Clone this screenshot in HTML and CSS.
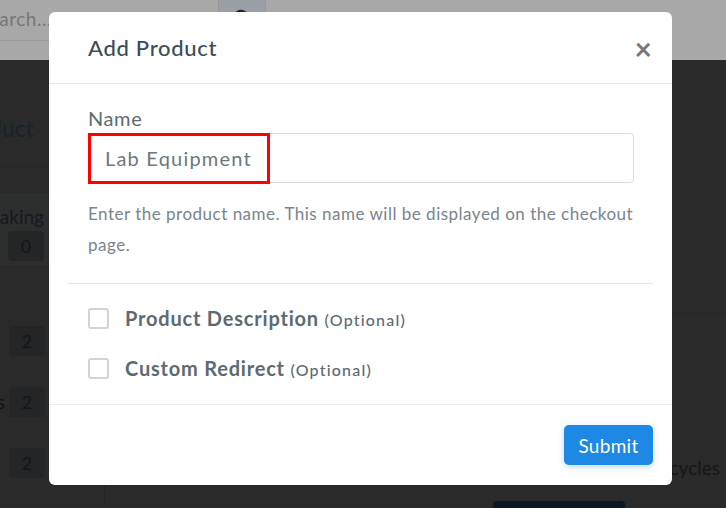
FILE: index.html
```html
<!DOCTYPE html>
<html lang="en">
<head>
  <meta charset="UTF-8">
  <title>Add Product</title>
  <link rel="stylesheet" href="styles.css">
</head>
<body>

<div class="topbar">
  <div class="search">
    <span class="search-input">Search...</span>
    <span class="search-btn">
      <svg width="20" height="20" viewBox="0 0 20 20"><circle cx="9" cy="9" r="6" fill="none" stroke="#222" stroke-width="2.5"/><path d="M13.5 13.5l5 5" stroke="#222" stroke-width="2.5"/></svg>
    </span>
  </div>
</div>

<div class="page">
  <div class="sidebar">
    <div class="side-title"><span>Product</span></div>
    <div class="side-block">
      <div class="side-line"><span>Making</span></div>
      <div class="side-line"><span class="badge">0</span></div>
    </div>
    <div class="side-row"><span class="badge">2</span></div>
    <div class="side-row"><span class="side-name">Items</span><span class="badge">2</span></div>
    <div class="side-row"><span class="badge">2</span></div>
  </div>
  <div class="main">
    <div class="main-top"></div>
    <div class="main-rest">
      <div class="cycles">Billing cycles</div>
      <div class="dark-btn"></div>
    </div>
  </div>
</div>

<div class="modal">
  <div class="modal-header">
    <h2>Add Product</h2>
    <span class="close">&times;</span>
  </div>
  <div class="modal-body">
    <label class="field-label">Name</label>
    <div class="input-wrap">
      <div class="input">Lab Equipment</div>
      <div class="marker"></div>
    </div>
    <p class="help">Enter the product name. This name will be displayed on the checkout page.</p>
  </div>
  <hr class="sep">
  <div class="options">
    <div class="option"><span class="check"></span><span class="opt-text">Product Description <small>(Optional)</small></span></div>
    <div class="option"><span class="check"></span><span class="opt-text">Custom Redirect <small>(Optional)</small></span></div>
  </div>
  <div class="modal-footer">
    <button class="submit">Submit</button>
  </div>
</div>

</body>
</html>
```

FILE: styles.css
```css
body {
  margin: 0;
  background-color: #2a2a2a;
  font-family: Lato, "Open Sans", sans-serif;
  height: 508px;
  overflow: hidden;
}
.topbar {
  height: 60px;
  background-color: #a8a8a8;
}
.search {
  display: flex;
  width: 266px;
  height: 41px;
  border-bottom: 1px solid #999;
  box-sizing: border-box;
}
.search-input {
  width: 242px;
  margin-left: -22px;
  padding-top: 7px;
  font-size: 19px;
  letter-spacing: 0.5px;
  color: #777;
  border-right: 1px solid #959595;
  box-sizing: border-box;
}
.search-btn {
  width: 46px;
  background-color: #9a9ea5;
  display: flex;
  justify-content: center;
  padding-top: 8px;
  border-right: 1px solid #999;
}
.page {
  display: flex;
  height: 448px;
}
.sidebar {
  width: 105px;
  flex-shrink: 0;
  border-right: 1px solid #242424;
  box-sizing: border-box;
}
.side-title {
  display: flex;
  justify-content: flex-end;
  padding: 54px 70px 24px 0;
  font-size: 23px;
  color: #17232b;
  white-space: nowrap;
  border-bottom: 1px solid #262626;
}
.side-block {
  margin-top: 26px;
  height: 72px;
  padding-top: 12px;
  box-sizing: border-box;
  background-color: #2d2f2f;
}
.side-line {
  display: flex;
  justify-content: flex-end;
  padding-right: 60px;
  font-size: 19px;
  color: #131a1e;
  white-space: nowrap;
}
.side-line .badge {
  margin-top: 3px;
}
.side-row {
  display: flex;
  justify-content: flex-end;
  align-items: center;
  gap: 4px;
  padding-right: 59px;
  height: 61px;
  font-size: 19px;
  color: #131313;
  white-space: nowrap;
}
.side-block + .side-row {
  margin-top: 45px;
}
.badge {
  width: 36px;
  height: 30px;
  flex-shrink: 0;
  border-radius: 4px;
  background-color: #232526;
  display: flex;
  justify-content: center;
  align-items: center;
  font-size: 18px;
  color: #161616;
}
.main {
  flex: 1;
}
.main-top {
  height: 253px;
  border-bottom: 1px solid #262626;
}
.main-rest {
  display: flex;
  flex-direction: column;
  align-items: flex-end;
  padding-top: 142px;
}
.cycles {
  font-size: 19px;
  color: #161616;
  margin-right: 6px;
  white-space: nowrap;
}
.dark-btn {
  width: 132px;
  height: 30px;
  margin-top: 22px;
  margin-right: 101px;
  background-color: #0b1824;
  border-radius: 4px;
}
.modal {
  position: absolute;
  left: 49px;
  top: 12px;
  width: 623px;
  background-color: #fff;
  border-radius: 6px;
}
.modal-header {
  height: 71px;
  display: flex;
  align-items: center;
  justify-content: space-between;
  padding: 0 20px 0 39px;
  border-bottom: 1px solid #e9e9e9;
}
.modal-header h2 {
  margin: 0;
  font-size: 22px;
  font-weight: 500;
  letter-spacing: 0.7px;
  color: #3c4d58;
}
.close {
  font-size: 30px;
  font-weight: bold;
  color: #777;
  line-height: 1;
}
.modal-body {
  padding: 22px 38px 0 39px;
}
.field-label {
  display: block;
  font-size: 20px;
  letter-spacing: 0.6px;
  color: #5d6a74;
  line-height: 24px;
  margin-bottom: 3px;
}
.input-wrap {
  position: relative;
}
.input {
  height: 50px;
  border: 1px solid #dcdcdc;
  border-radius: 4px;
  box-sizing: border-box;
  padding-left: 16px;
  display: flex;
  align-items: center;
  font-size: 20px;
  letter-spacing: 1.2px;
  color: #6b7883;
}
.marker {
  position: absolute;
  left: 0;
  top: 0;
  width: 182px;
  height: 51px;
  border: 3px solid #f00;
  box-sizing: border-box;
}
.help {
  margin: 15px 0 0 0;
  font-size: 17px;
  letter-spacing: 0.5px;
  line-height: 31px;
  color: #7a848c;
}
.sep {
  margin: 23px 19px 0 19px;
  border: 0;
  border-top: 1px solid #e6e6e6;
}
.options {
  padding: 19px 39px 21px 39px;
  display: flex;
  flex-direction: column;
  gap: 20px;
}
.option {
  display: flex;
  align-items: center;
  gap: 16px;
  height: 30px;
}
.check {
  width: 21px;
  height: 21px;
  border: 2px solid #d3d3d3;
  border-radius: 3px;
  box-sizing: border-box;
}
.opt-text {
  font-size: 20px;
  font-weight: 700;
  letter-spacing: 0.8px;
  color: #5d6a74;
}
.opt-text small {
  font-size: 16px;
  font-weight: 500;
  letter-spacing: 1.2px;
}
.modal-footer {
  border-top: 1px solid #ececec;
  display: flex;
  justify-content: flex-end;
  padding: 20px 19px 20px 0;
}
.submit {
  width: 89px;
  height: 40px;
  background-color: #1e88e5;
  color: #fff;
  border: 0;
  border-radius: 5px;
  font-family: Lato, sans-serif;
  font-size: 19px;
  letter-spacing: 0.3px;
  box-shadow: 0 2px 6px rgba(30, 136, 229, 0.3);
}
```
